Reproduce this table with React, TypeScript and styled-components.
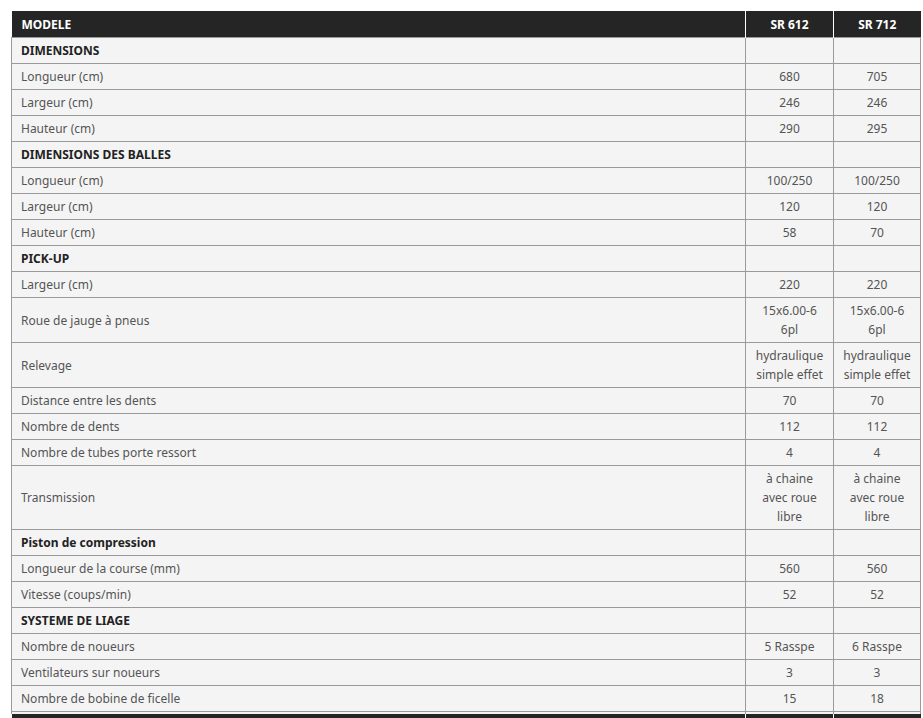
import React from 'react';
import styled, { createGlobalStyle } from 'styled-components';

const GlobalStyle = createGlobalStyle`
  body {
    margin: 0;
    background: #fff;
    font-family: "Noto Sans", "Open Sans", sans-serif;
  }
`;

const Page = styled.div`
  padding: 11px 4px 0 11px;
  height: 718px;
  overflow: hidden;
  box-sizing: border-box;
`;

const Table = styled.table`
  width: 909px;
  border-collapse: collapse;
  table-layout: fixed;
  font-size: 12px;
  line-height: 19px;
  color: #555;
`;

const HeadCell = styled.th<{ $center?: boolean }>`
  background: #252525;
  color: #fff;
  font-weight: 700;
  text-align: ${(p) => (p.$center ? 'center' : 'left')};
  padding: 3px 10px;
  height: 20px;
  border-left: 1px solid #fff;
  &:first-child {
    border-left: none;
  }
`;

const Cell = styled.td<{ $center?: boolean; $bold?: boolean }>`
  background: #f4f4f4;
  border: 1px solid #9a9a9a;
  padding: 3px 9px;
  height: 19px;
  text-align: ${(p) => (p.$center ? 'center' : 'left')};
  font-weight: ${(p) => (p.$bold ? 700 : 400)};
  color: ${(p) => (p.$bold ? '#222' : '#555')};
  vertical-align: middle;
`;

const GapRow = styled.tr`
  td {
    padding: 0;
    height: 2px;
    background: #f4f4f4;
    border-left: 1px solid #9a9a9a;
    border-right: 1px solid #9a9a9a;
  }
`;

type Row = { label: string; a?: string; b?: string; section?: boolean };

const rows: Row[] = [
  { label: 'DIMENSIONS', section: true },
  { label: 'Longueur (cm)', a: '680', b: '705' },
  { label: 'Largeur (cm)', a: '246', b: '246' },
  { label: 'Hauteur (cm)', a: '290', b: '295' },
  { label: 'DIMENSIONS DES BALLES', section: true },
  { label: 'Longueur (cm)', a: '100/250', b: '100/250' },
  { label: 'Largeur (cm)', a: '120', b: '120' },
  { label: 'Hauteur (cm)', a: '58', b: '70' },
  { label: 'PICK-UP', section: true },
  { label: 'Largeur (cm)', a: '220', b: '220' },
  { label: 'Roue de jauge à pneus', a: '15x6.00-6\n6pl', b: '15x6.00-6\n6pl' },
  { label: 'Relevage', a: 'hydraulique\nsimple effet', b: 'hydraulique\nsimple effet' },
  { label: 'Distance entre les dents', a: '70', b: '70' },
  { label: 'Nombre de dents', a: '112', b: '112' },
  { label: 'Nombre de tubes porte ressort', a: '4', b: '4' },
  { label: 'Transmission', a: 'à chaine\navec roue\nlibre', b: 'à chaine\navec roue\nlibre' },
  { label: 'Piston de compression', section: true },
  { label: 'Longueur de la course (mm)', a: '560', b: '560' },
  { label: 'Vitesse (coups/min)', a: '52', b: '52' },
  { label: 'SYSTEME DE LIAGE', section: true },
  { label: 'Nombre de noueurs', a: '5 Rasspe', b: '6 Rasspe' },
  { label: 'Ventilateurs sur noueurs', a: '3', b: '3' },
  { label: 'Nombre de bobine de ficelle', a: '15', b: '18' },
];

const Lines: React.FC<{ text?: string }> = ({ text }) => {
  if (!text) return null;
  const parts = text.split('\n');
  return (
    <>
      {parts.map((part, i) => (
        <React.Fragment key={part + i}>
          {part}
          {i < parts.length - 1 && <br />}
        </React.Fragment>
      ))}
    </>
  );
};

const App: React.FC = () => {
  return (
    <Page>
      <GlobalStyle />
      <Table>
        <colgroup>
          <col style={{ width: 734 }} />
          <col style={{ width: 88 }} />
          <col style={{ width: 87 }} />
        </colgroup>
        <thead>
          <tr>
            <HeadCell>MODELE</HeadCell>
            <HeadCell $center>SR 612</HeadCell>
            <HeadCell $center>SR 712</HeadCell>
          </tr>
        </thead>
        <tbody>
          {rows.map((row, i) => (
            <tr key={row.label + i}>
              <Cell $bold={row.section}>{row.label}</Cell>
              <Cell $center><Lines text={row.a} /></Cell>
              <Cell $center><Lines text={row.b} /></Cell>
            </tr>
          ))}
          <GapRow>
            <td />
            <td />
            <td />
          </GapRow>
          <tr>
            <HeadCell />
            <HeadCell $center />
            <HeadCell $center />
          </tr>
        </tbody>
      </Table>
    </Page>
  );
};

export default App;
